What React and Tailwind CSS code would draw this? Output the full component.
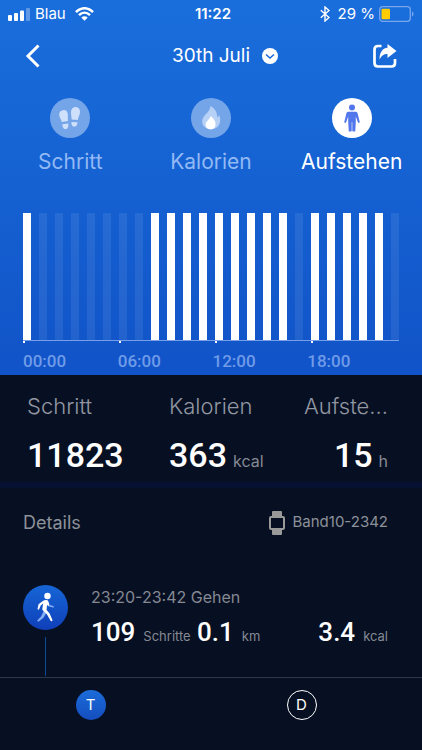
import React from "react";

const stoodHours = [0, 8, 9, 10, 11, 12, 13, 14, 15, 16, 18, 19, 20, 21, 22];
const hours = Array.from({ length: 24 }, (_, hour) => hour);
const quarters = ["00:00", "06:00", "12:00", "18:00"];

function StatusBar() {
  return (
    <div className="grid h-7 grid-cols-3 items-center pr-2 pl-2 text-[15px]">
      <div className="flex items-center gap-[5px]">
        <svg width="22" height="13" viewBox="0 0 22 13" fill="currentColor" aria-hidden="true">
          <rect x="0" y="7" width="4" height="6" rx="1" />
          <rect x="6" y="5" width="4" height="8" rx="1" />
          <rect x="12" y="2.500" width="4" height="10.500" rx="1" />
          <rect x="18" y="0" width="4" height="13" rx="1" opacity="0.3" />
        </svg>
        <span>Blau</span>
        <svg className="ml-1" width="19" height="14" viewBox="0 0 19 14" fill="none" stroke="currentColor" strokeWidth="2.5" aria-hidden="true">
          <path d="M1 5.2C6-.1 13-.1 18 5.2" />
          <path d="M4 8.2c3.400-3.300 7.600-3.300 11 0" />
          <path d="M6.300 10.600c2-1.800 4.400-1.800 6.400 0L9.500 13.800z" fill="currentColor" stroke="none" />
        </svg>
      </div>
      <div className="pl-1 text-center font-semibold">11:22</div>
      <div className="flex items-center justify-end gap-2">
        <svg width="10" height="16" viewBox="0 0 10 16" fill="none" stroke="currentColor" strokeWidth="1.4" aria-hidden="true">
          <path d="M.8 4.300 9 11.500 5 15V1l4 3.500L.8 11.700" />
        </svg>
        <span className="whitespace-nowrap">29 %</span>
        <svg className="-ml-1" width="35" height="16" viewBox="0 0 35 16" fill="none" aria-hidden="true">
          <rect x="0.7" y="0.7" width="30.6" height="14.6" rx="3" stroke="#78a7ee" strokeWidth="1.3" />
          <rect x="2.5" y="2.8" width="8.5" height="10.4" rx="1" fill="#ffcc00" />
          <path d="M33 5.500c2 .8 2 4.200 0 5z" fill="#78a7ee" />
        </svg>
      </div>
    </div>
  );
}

function FootprintsIcon() {
  return (
    <svg width="40" height="40" viewBox="0 0 40 40" fill="#cfe0fa" aria-hidden="true">
      <path d="M13 12.200c2.600-.5 4.500 1.100 4.800 4 .2 2.400 0 4.200.2 6.800l-6.200 1c-.5-2.600-2.600-4.700-2.600-7.800 0-2.300 1.500-3.700 3.800-4z" />
      <path d="m12.400 26.300 5.900-.9c.3 3.400-.4 5.400-2.600 5.700-2.100.3-3.300-1.500-3.300-4.800z" />
      <path d="M25.800 9c2.600.3 4.300 2.200 4.200 5-.1 3.300-1.900 5.400-2.200 8l-6.200-.4c.1-2.800-.7-4.800-.6-7.600.1-3.100 2-5.300 4.800-5z" />
      <path d="m21.400 23.900 6.100.4c-.2 3.200-1.500 4.600-3.500 4.300-1.900-.3-2.800-2-2.600-4.700z" />
    </svg>
  );
}

function FlameIcon() {
  return (
    <svg width="40" height="40" viewBox="0 0 40 40" aria-hidden="true">
      <path d="M19.500 8c4.200 2.500 6.800 6 6.800 11.400 1-.5 1.600-1.300 1.900-2.400 2.500 6.400.2 11.700-4.400 13.500-6.700 2.400-13.300-1.500-12.600-8 .6-5.300 7.600-7.700 8.300-14.500z" fill="#b6d0f6" />
      <path d="M19.600 18c3.100 2 5 5 5 8.300 0 3.100-2 5-5 5s-5.200-2-5-5c.3-3.400 4.200-4.600 5-8.300z" fill="#fff" />
    </svg>
  );
}

function StandingIcon() {
  return (
    <svg width="40" height="40" viewBox="0 0 40 40" fill="#5276ec" aria-hidden="true">
      <circle cx="20" cy="9.500" r="3" />
      <path d="M16.500 13.700h7c1 0 1.700.5 2.100 1.500l2 8.400c.2.800-.1 1.300-.7 1.300s-.9-.3-1.100-.9L23.800 18.500v4.700l-.5 9.300c0 .6-.4 1-1 1h-1.200c-.5 0-.8-.3-.8-.8V24.200h-.6v8.500c0 .5-.3.800-.8.800h-1.200c-.6 0-1-.4-1-1l-.5-9.300v-4.700L14.200 24c-.2.600-.5.900-1.100.9s-.9-.5-.7-1.300l2-8.400c.4-1 1.100-1.500 2.100-1.500z" />
    </svg>
  );
}

function WalkingIcon() {
  return (
    <svg width="45" height="45" viewBox="0 0 46 46" aria-hidden="true">
      <path d="m21.500 25.500 2.600 2.700-3.100 5.400-4.800 3.600c-1.200.7-2-.3-1.200-1.300l3.600-3.900z" fill="#83acf5" />
      <path d="m27 20.200 3.800 1.300c1.400.6.900 1.800-.4 1.600l-4.600-1.300z" fill="#83acf5" />
      <circle cx="25" cy="11.300" r="3.300" fill="#fff" />
      <path d="M20.600 16.200c1.300-1.100 3.200-1.300 4.400-.5 1 .8 1.600 3.100 2 4.500l-1.200 1.600-1.200-1.600-.5 5.300 3 3.500 3 6.900c.4 1.200-1.100 1.700-1.900.6l-3.600-6.300-4.300-4.300c-.6-.7-.6-1.200-.5-2l.8-4.900-2.500 1.900-1.500 3.600c-.5 1.100-1.900.8-1.700-.4l1-4.400z" fill="#fff" />
    </svg>
  );
}

const tabs = [
  { label: "Schritt", icon: <FootprintsIcon />, active: false },
  { label: "Kalorien", icon: <FlameIcon />, active: false },
  { label: "Aufstehen", icon: <StandingIcon />, active: true },
];

function Chart() {
  return (
    <div className="mx-[23px] mt-[37px]">
      <div className="flex h-32 justify-between border-b border-[#75a0e8]">
        {hours.map((hour) => (
          <div key={hour} className={stoodHours.includes(hour) ? "w-2 bg-white" : "w-2 bg-white/8"} />
        ))}
      </div>
      <div className="mr-[-8px] grid grid-cols-4">
        {quarters.map((time) => (
          <div key={time} className="size-[2px] bg-white" />
        ))}
      </div>
      <div className="mr-[-3px] grid h-8 grid-cols-4 pt-[6px] font-['Roboto',sans-serif] text-[17px] leading-6 font-medium text-[#6f9be8]">
        {quarters.map((time) => (
          <div key={time}>{time}</div>
        ))}
      </div>
    </div>
  );
}

function Summary({ label, value, unit }) {
  return (
    <div>
      <dt className="text-[22px] leading-8 font-light whitespace-nowrap text-[#9297a3]">{label}</dt>
      <dd className="mt-[9px] flex items-baseline gap-[6px] whitespace-nowrap group-last:justify-end">
        <span className="font-['Roboto',sans-serif] text-[34px] leading-[48px] font-medium">{value}</span>
        {unit && <span className="text-base text-[#858994]">{unit}</span>}
      </dd>
    </div>
  );
}

function Measure({ value, unit }) {
  return (
    <span className="flex items-baseline gap-2 whitespace-nowrap">
      <span className="font-['Roboto',sans-serif] text-[26px] leading-8 font-medium">{value}</span>
      <span className="text-[13px] text-[#858994]">{unit}</span>
    </span>
  );
}

export default function App() {
  return (
    <div className="flex min-h-screen flex-col bg-[#071022] font-['Inter','Liberation_Sans',sans-serif] text-white">
      <header className="bg-linear-to-b from-[#1a6edc] to-[#1153c8]">
        <StatusBar />
        <div className="grid h-14 grid-cols-3 items-center px-6">
          <button aria-label="Zurück" className="justify-self-start">
            <svg width="17" height="24" viewBox="0 0 17 24" fill="none" stroke="currentColor" strokeWidth="3" aria-hidden="true">
              <path d="M14.500 1.500 4 12l10.500 10.500" />
            </svg>
          </button>
          <button className="flex items-center gap-3 justify-self-center pl-7 text-[19px] whitespace-nowrap">
            30th Juli
            <svg width="16" height="16" viewBox="0 0 16 16" aria-hidden="true">
              <circle cx="8" cy="8" r="8" fill="#fff" />
              <path d="m4 6.500 4 3.500 4-3.500" fill="none" stroke="#1969da" strokeWidth="1.5" />
            </svg>
          </button>
          <button aria-label="Teilen" className="justify-self-end">
            <svg width="26" height="26" viewBox="0 0 26 26" fill="none" aria-hidden="true">
              <path d="M9.500 3H6Q2.500 3 2.500 6.500V20Q2.500 23.500 6 23.500H19.500Q23 23.500 23 20V16" stroke="#fff" strokeWidth="2.7" />
              <path d="M15.500 1 24.500 8l-9 7V11C12 11 10 12.200 7.500 16.500 7.500 9.500 10.300 5.200 15.500 4.800z" fill="#fff" />
            </svg>
          </button>
        </div>
        <nav className="mt-[14px] grid grid-cols-3">
          {tabs.map((tab) => (
            <button key={tab.label} className={tab.active ? "flex flex-col items-center gap-[10px] text-white" : "flex flex-col items-center gap-[10px] text-[#92b9f3]"}>
              <span className={tab.active ? "rounded-full bg-white" : "rounded-full bg-[#75a5e9]"}>{tab.icon}</span>
              <span className="text-[21px] leading-7">{tab.label}</span>
            </button>
          ))}
        </nav>
        <Chart />
      </header>

      <dl className="grid h-[107px] grid-cols-[142px_1fr_auto] pt-[15px] pr-[34px] pl-[27px]">
        <Summary label="Schritt" value="11823" />
        <Summary label="Kalorien" value="363" unit="kcal" />
        <div className="text-right">
          <dt className="text-[22px] leading-8 font-light whitespace-nowrap text-[#9297a3]">Aufste...</dt>
          <dd className="mt-[9px] flex items-baseline justify-end gap-[6px]">
            <span className="font-['Roboto',sans-serif] text-[34px] leading-[48px] font-medium">15</span>
            <span className="text-base text-[#858994]">h</span>
          </dd>
        </div>
      </dl>

      <main className="flex-1 border-t-[6px] border-[#061033]">
        <div className="flex h-[69px] items-center justify-between pr-[34px] pl-[23px] text-[#8d9199]">
          <h2 className="text-[18px]">Details</h2>
          <div className="flex items-center gap-2 text-[15px]">
            <svg width="16" height="24" viewBox="0 0 16 24" aria-hidden="true">
              <path d="M3 1Q3 0 4 0h8q1 0 1 1v4H3zM3 19h10v4q0 1-1 1H4q-1 0-1-1z" fill="#999" />
              <rect x="1" y="6" width="14" height="12" rx="1" fill="none" stroke="#999" strokeWidth="2" />
            </svg>
            Band10-2342
          </div>
        </div>
        <section className="flex pt-7 pr-[34px] pl-[23px]">
          <div className="flex w-[68px] shrink-0 flex-col items-start">
            <div className="rounded-full bg-linear-to-b from-[#1765d6] to-[#103fb9]"><WalkingIcon /></div>
            <div className="mt-[7px] ml-[22px] h-[39px] w-px bg-[#0c4a93]" />
          </div>
          <div className="min-w-0 flex-1">
            <h3 className="text-base leading-6 text-[#858994]">23:20-23:42 Gehen</h3>
            <div className="mt-[7px] grid grid-cols-[106px_1fr_auto]">
              <Measure value="109" unit="Schritte" />
              <Measure value="0.1" unit="km" />
              <Measure value="3.4" unit="kcal" />
            </div>
          </div>
        </section>
      </main>

      <footer className="grid h-[73px] grid-cols-2 border-t border-[#303748] pt-3">
        <div className="flex justify-center pr-[30px]">
          <button className="size-[30px] rounded-full bg-linear-to-b from-[#1b6cda] to-[#154dbe] text-[15px]">T</button>
        </div>
        <div className="flex justify-center pr-[30px]">
          <button className="size-[30px] rounded-full border border-white text-[15px]">D</button>
        </div>
      </footer>
    </div>
  );
}
